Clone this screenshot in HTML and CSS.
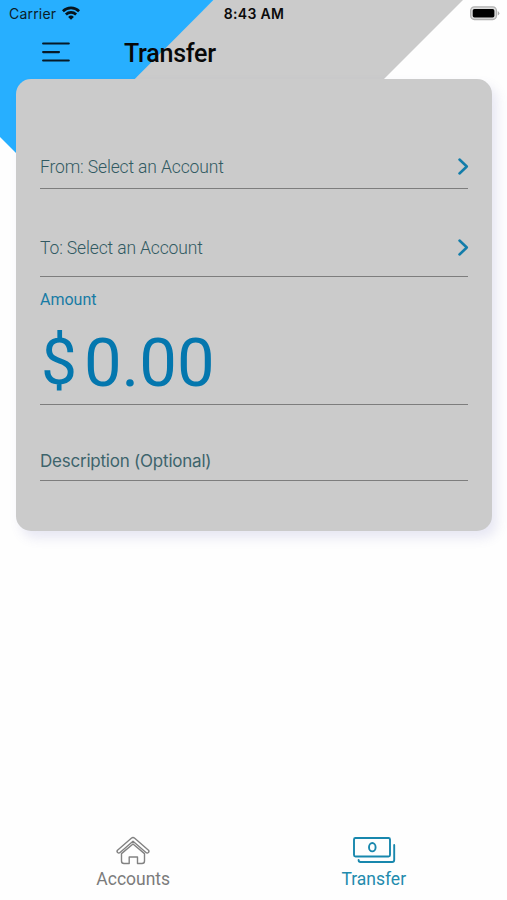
FILE: index.html
```html
<!DOCTYPE html>
<html lang="en">
<head>
<meta charset="utf-8">
<title>Transfer</title>
<link rel="stylesheet" href="styles.css">
</head>
<body>
<div class="screen">
  <svg class="backdrop" width="507" height="180" viewBox="0 0 507 180" aria-hidden="true">
    <path d="M213.500 0H463L383 80H130z" fill="#cbcbcb"/>
    <path d="M0 0H213.500L38.500 175.500L0 137z" fill="#27afff"/>
  </svg>
  <div class="status">
    <div class="carrier"><span>Carrier</span>
      <svg width="18" height="14" viewBox="0 0 18 14" fill="none" stroke="#07141d" stroke-width="2.700">
        <path d="M.9 5.200C5.500.7 12.500.7 17.100 5.200"/>
        <path d="M3.900 8.500C6.800 5.700 11.200 5.700 14.100 8.500"/>
        <path d="M9 13.800L6.100 10.900Q9 8.300 11.900 10.900z" fill="#07141d" stroke="none"/>
      </svg>
    </div>
    <div class="time">8:43 AM</div>
    <svg class="battery" width="30" height="15" viewBox="0 0 31 15">
      <rect x=".7" y=".7" width="26.600" height="13" rx="3.800" fill="#ddd" stroke="#b0b0b0" stroke-width="1.300"/>
      <rect x="2.800" y="2.800" width="22.400" height="8.800" rx="1.800" fill="#000"/>
      <path d="M28.700 4.800Q32 7.200 28.700 9.600z" fill="#a9a9a9"/>
    </svg>
  </div>
  <header class="nav">
    <svg class="menu" width="28" height="21" viewBox="0 0 28 21" stroke="#071a27" stroke-width="2.100" stroke-linecap="round">
      <path d="M1.100 1.500H26.800M1.100 10.100H17M1.100 18.500H26.800"/>
    </svg>
    <h1>Transfer</h1>
  </header>
  <main class="card">
    <div class="field from"><span>From: Select an Account</span>
      <svg class="chevron" width="11" height="17" viewBox="0 0 11 17"><path d="M1.500 1.500L8.800 8.500L1.500 15.500"/></svg>
    </div>
    <div class="field to"><span>To: Select an Account</span>
      <svg class="chevron" width="11" height="17" viewBox="0 0 11 17"><path d="M1.500 1.500L8.800 8.500L1.500 15.500"/></svg>
    </div>
    <div class="field amount">
      <label>Amount</label>
      <div class="value"><span class="currency">$</span><span>0.00</span></div>
    </div>
    <div class="field description"><span>Description (Optional)</span></div>
  </main>
  <nav class="tabs">
    <div class="tab accounts">
      <svg width="36" height="30" viewBox="0 0 36 30" fill="none" stroke="#828282" stroke-width="1.400" stroke-linejoin="round">
        <path d="M2.500 14.200L16.300 2.200Q18 .8 19.700 2.200L33.500 14.200Q34.500 15.500 33.400 16.500Q32.200 17.500 31 16.500L18 5.200L5 16.500Q3.800 17.500 2.600 16.500Q1.500 15.500 2.500 14.200z"/>
        <path d="M6.500 17.600L18 8L29.500 17.600V25Q29.500 27.500 27 27.500H22.500V21H14.200V27.500H9Q6.500 27.500 6.500 25z"/>
      </svg>
      <span>Accounts</span>
    </div>
    <div class="tab active">
      <svg width="44" height="30" viewBox="0 0 44 30" fill="none" stroke="#1887ad" stroke-width="1.900" stroke-linecap="round" stroke-linejoin="round">
        <rect x="2" y="2" width="36" height="18.500" rx="1.500"/>
        <ellipse cx="20.300" cy="11.200" rx="3.300" ry="4.200"/>
        <path d="M42.200 9V24Q42.200 26 40.200 26H8.500Q6.600 26 6.600 24"/>
      </svg>
      <span>Transfer</span>
    </div>
  </nav>
</div>
</body>
</html>
```
FILE: styles.css
```css
* { box-sizing: border-box; }
body { margin: 0; background: #fefefe; font-family: Roboto, sans-serif; }
svg { display: block; flex: none; }
span, label, .time, h1 { white-space: nowrap; }
.screen { position: relative; width: 507px; height: 900px; overflow: hidden; display: flex; flex-direction: column; }
.backdrop { position: absolute; left: 0; top: 0; }
.status { position: relative; height: 27px; flex: none; display: grid; grid-template-columns: 1fr auto 1fr; align-items: center; padding: 0 7px 0 9px; font-family: Inter, sans-serif; font-size: 14px; line-height: 18px; color: #0b1d29; }
.carrier { display: flex; align-items: center; gap: 6px; letter-spacing: .2px; }
.carrier svg { margin-top: -2px; }
.time { font-weight: 600; color: #0b0b0b; letter-spacing: .35px; margin-right: 1px; }
.battery { justify-self: end; }
.nav { position: relative; height: 52px; flex: none; display: flex; align-items: center; padding: 0 42px; gap: 54px; }
.menu { margin-top: -2px; }
.nav h1 { margin: 0; padding-top: 1px; font-size: 25px; line-height: 30px; font-weight: 500; letter-spacing: -.25px; color: #080808; }
.card { position: relative; flex: none; width: 476.500px; height: 452px; margin-left: 15.500px; padding: 0 24.500px; border-radius: 15px; background: #cbcbcb; box-shadow: 5px 7px 12px rgba(90, 90, 180, .14); }
.field { border-bottom: 1px solid #7d7d7d; color: #315a62; font-size: 17.500px; font-weight: 300; line-height: 22px; letter-spacing: -.14px; display: flex; justify-content: space-between; }
.from { height: 110px; padding-top: 77px; }
.to { height: 88px; padding-top: 48px; }
.chevron { margin: 2px -1px 0 0; fill: none; stroke: #137daa; stroke-width: 2.500; stroke-linecap: round; stroke-linejoin: round; }
.amount { height: 128px; flex-direction: column; justify-content: flex-start; padding-top: 12px; letter-spacing: 0; }
.amount label { color: #177ba5; font-size: 16px; font-weight: 400; }
.value { display: flex; gap: 7px; color: #0477ae; font-size: 67px; line-height: 80px; font-weight: 400; margin-top: 12px; }
.currency { font-size: 64px; padding-left: 1px; }
.description { height: 76px; padding-top: 45px; font-family: Inter, sans-serif; font-size: 17px; font-weight: 400; letter-spacing: -.22px; color: #3d646c; }
.tabs { position: relative; margin-top: auto; height: 67px; display: grid; grid-template-columns: 1fr 1fr; padding: 0 13px; font-size: 17.500px; line-height: 22px; color: #7b7b7b; }
.tab { display: flex; flex-direction: column; align-items: center; gap: 2px; padding-top: 3px; }
.active { color: #238bad; }
```
